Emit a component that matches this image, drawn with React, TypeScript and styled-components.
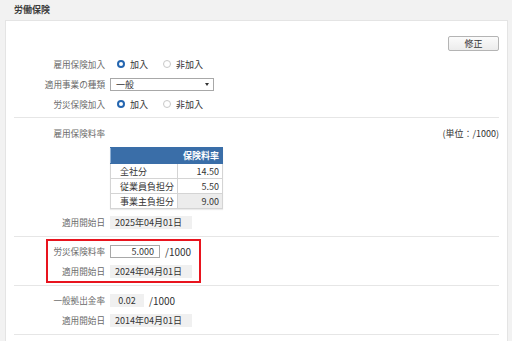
import styled, { createGlobalStyle } from "styled-components";

const GlobalStyle = createGlobalStyle`
  html, body {
    margin: 0;
    padding: 0;
    background: #f2f2f2;
    font-family: "Noto Sans CJK JP", "Noto Sans", sans-serif;
    font-size: 9px;
    color: #333;
  }
`;

const Page = styled.div`
  padding: 0 4px 0 5px;
`;

const Title = styled.div`
  height: 20px;
  line-height: 20px;
  padding-left: 9px;
  font-weight: bold;
  color: #3c3c3c;
`;

const Panel = styled.div`
  background: #fff;
  border: 1px solid #e4e4e4;
  border-bottom: none;
  padding: 0 8px;
  min-height: 330px;
`;

const Section = styled.div<{ $top: number; $bottom: number }>`
  padding-top: ${(p) => p.$top}px;
  padding-bottom: ${(p) => p.$bottom}px;
  border-bottom: 1px solid #e6e6e6;
`;

const Toolbar = styled.div`
  display: flex;
  justify-content: flex-end;
  margin-bottom: 3px;
`;

const Button = styled.button`
  width: 51px;
  height: 15px;
  padding: 0;
  border: 1px solid #b4b4b4;
  border-radius: 2px;
  background: linear-gradient(#fbfbfb, #ececec);
  font-family: inherit;
  font-size: 9px;
  color: #333;
`;

const Row = styled.div`
  display: flex;
  align-items: center;
  height: 20px;
  gap: 5px;
`;

const Label = styled.div<{ $width?: number }>`
  width: ${(p) => p.$width ?? 91}px;
  flex-shrink: 0;
  text-align: right;
  font-size: 8.6px;
  color: #6a6a6a;
  white-space: nowrap;
`;

const Spread = styled.div`
  flex: 1;
  text-align: right;
  color: #333;
`;

const RadioGroup = styled.div`
  display: flex;
  align-items: center;
  padding-left: 7px;
  gap: 15px;
`;

const RadioItem = styled.label`
  display: flex;
  align-items: center;
  gap: 5px;
  color: #333;
`;

const RadioMark = styled.span<{ $checked: boolean }>`
  box-sizing: border-box;
  width: 8px;
  height: 8px;
  border-radius: 50%;
  background: #fff;
  border: ${(p) => (p.$checked ? "2px solid #2466b0" : "1px solid #c8c8c8")};
`;

const Select = styled.div`
  box-sizing: border-box;
  width: 104px;
  height: 13px;
  border: 1px solid #a8a8a8;
  display: flex;
  align-items: center;
  justify-content: space-between;
  padding: 0 4px 0 5px;
  color: #333;
`;

const Caret = styled.span`
  width: 0;
  height: 0;
  border-left: 2px solid transparent;
  border-right: 2px solid transparent;
  border-top: 3px solid #333;
`;

const TableWrap = styled.div`
  padding: 4px 0 3px 96px;
`;

const RateTable = styled.table`
  border-collapse: collapse;
  border: 1px solid #c4c4c4;
  box-shadow: 0 1px 1px rgba(0, 0, 0, 0.08);
`;

const HeadCell = styled.th<{ $width: number }>`
  width: ${(p) => p.$width}px;
  height: 15px;
  padding: 0 3px;
  background: #3a6ea8;
  color: #fff;
  font-weight: bold;
  text-align: right;
  border: 1px solid #3a6ea8;
  border-left-color: #8fb0d4;
`;

const Cell = styled.td<{ $num?: boolean; $shade?: boolean }>`
  height: 14px;
  padding: ${(p) => (p.$num ? "0 3px 0 0" : "0 0 0 9px")};
  text-align: ${(p) => (p.$num ? "right" : "left")};
  background: ${(p) => (p.$shade ? "#ececec" : "#fff")};
  border: 1px solid #d4d4d4;
  color: #333;
`;

const ReadOnly = styled.div<{ $width: number; $center?: boolean }>`
  box-sizing: border-box;
  width: ${(p) => p.$width}px;
  height: 13px;
  line-height: 13px;
  padding: 0 5px;
  background: #f0f0f0;
  text-align: ${(p) => (p.$center ? "center" : "left")};
  color: #333;
`;

const NumberInput = styled.div`
  box-sizing: border-box;
  width: 50px;
  height: 13px;
  line-height: 11px;
  border: 1px solid #a8a8a8;
  padding-right: 5px;
  text-align: right;
  color: #333;
`;

const Unit = styled.span`
  color: #333;
  font-size: 10px;
`;

const Highlight = styled.div`
  width: fit-content;
  margin: 2px 0 2px 32px;
  padding-right: 7px;
  border: 2px solid #e8141e;
`;

const Radio = ({ checked, label }: { checked: boolean; label: string }) => (
  <RadioItem>
    <RadioMark $checked={checked} />
    {label}
  </RadioItem>
);

const rates = [
  { name: "全社分", value: "14.50" },
  { name: "従業員負担分", value: "5.50" },
  { name: "事業主負担分", value: "9.00", shade: true },
];

const App = () => {
  return (
    <>
      <GlobalStyle />
      <Page>
        <Title>労働保険</Title>
        <Panel>
          <Section $top={15} $bottom={3}>
            <Toolbar>
              <Button>修正</Button>
            </Toolbar>
            <Row>
              <Label>雇用保険加入</Label>
              <RadioGroup>
                <Radio checked label="加入" />
                <Radio checked={false} label="非加入" />
              </RadioGroup>
            </Row>
            <Row>
              <Label>適用事業の種類</Label>
              <Select>
                一般
                <Caret />
              </Select>
            </Row>
            <Row>
              <Label>労災保険加入</Label>
              <RadioGroup>
                <Radio checked label="加入" />
                <Radio checked={false} label="非加入" />
              </RadioGroup>
            </Row>
          </Section>

          <Section $top={5} $bottom={4}>
            <Row>
              <Label>雇用保険料率</Label>
              <Spread>(単位：/1000)</Spread>
            </Row>
            <TableWrap>
              <RateTable>
                <thead>
                  <tr>
                    <HeadCell $width={60} />
                    <HeadCell $width={38}>保険料率</HeadCell>
                  </tr>
                </thead>
                <tbody>
                  {rates.map((r) => (
                    <tr key={r.name}>
                      <Cell>{r.name}</Cell>
                      <Cell $num $shade={r.shade}>
                        {r.value}
                      </Cell>
                    </tr>
                  ))}
                </tbody>
              </RateTable>
            </TableWrap>
            <Row>
              <Label>適用開始日</Label>
              <ReadOnly $width={82}>2025年04月01日</ReadOnly>
            </Row>
          </Section>

          <Section $top={0} $bottom={0}>
            <Highlight>
              <Row>
                <Label $width={57}>労災保険料率</Label>
                <NumberInput>5.000</NumberInput>
                <Unit>/1000</Unit>
              </Row>
              <Row>
                <Label $width={57}>適用開始日</Label>
                <ReadOnly $width={82}>2024年04月01日</ReadOnly>
              </Row>
            </Highlight>
          </Section>

          <Section $top={4} $bottom={4}>
            <Row>
              <Label>一般拠出金率</Label>
              <ReadOnly $width={34} $center>
                0.02
              </ReadOnly>
              <Unit>/1000</Unit>
            </Row>
            <Row>
              <Label>適用開始日</Label>
              <ReadOnly $width={82}>2014年04月01日</ReadOnly>
            </Row>
          </Section>
        </Panel>
      </Page>
    </>
  );
};

export default App;
